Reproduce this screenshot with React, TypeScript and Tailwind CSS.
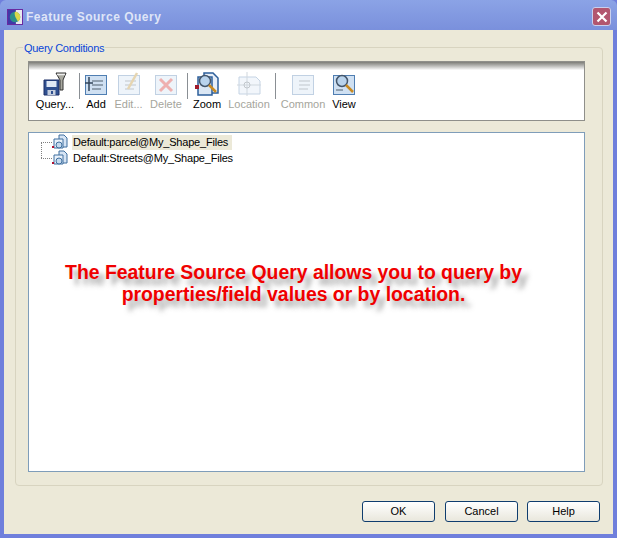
import type { ReactNode } from "react";

function Save() {
  return (
    <svg viewBox="0 0 24 24" className="h-6 w-6">
      <path d="M1 8h15v15H1z" fill="#2f4f8f" stroke="#1d2f66" />
      <path d="M3.500 9h10v6h-10z" fill="#dfe8f5" />
      <path d="M4.500 18h8v5h-8z" fill="#c5cede" />
      <path d="M8 19h2v3H8z" fill="#2f4f8f" />
      <path d="M13 1h10l-3 7v10h-3V8z" fill="#a9a9a0" stroke="#333" strokeWidth="1" />
      <path d="M14 2.500h8" stroke="#eee" strokeWidth="1.500" />
    </svg>
  );
}

function Sheet({ faded, children }: { faded?: boolean; children: ReactNode }) {
  return (
    <svg viewBox="0 0 24 24" className={faded ? "h-6 w-6 opacity-35" : "h-6 w-6"}>
      <rect x="1.500" y="3.500" width="21" height="19" fill="#cfe0f2" stroke="#4f7eb2" />
      {children}
    </svg>
  );
}

function Lines() {
  return <path d="M8 9h11M8 13h11M8 17h9" stroke="#50606f" strokeWidth="1" />;
}

function Lens() {
  return (
    <>
      <circle cx="10" cy="9" r="5.500" fill="#b9d3ec" stroke="#44566b" strokeWidth="1.500" />
      <path d="M14 13l7 7" stroke="#c98a22" strokeWidth="2.500" />
    </>
  );
}

function LayerIcon() {
  return (
    <svg viewBox="0 0 16 16" className="h-4 w-4 shrink-0">
      <path d="M7 1h5l3 3v9H7z" fill="#d6e4f4" stroke="#3f6f9f" />
      <path d="M2 5h9v9H2z" fill="#e9f1fa" stroke="#3f6f9f" />
      <circle cx="7" cy="11" r="3" fill="#c6daee" stroke="#3f6f9f" />
      <rect x="0" y="12" width="2" height="2" fill="#b01030" />
    </svg>
  );
}

function ToolItem({ label, width, off, children }: { label: string; width: string; off?: boolean; children: ReactNode }) {
  return (
    <div className={`flex shrink-0 flex-col items-center ${width}`}>
      <div className="flex h-6 items-center">{children}</div>
      <span className={`mt-[2px] whitespace-nowrap text-[11px] leading-[13px] ${off ? "text-[#a5a59c]" : "text-black"}`}>{label}</span>
    </div>
  );
}

function Sep() {
  return <div className="mt-[1px] h-[26px] w-px shrink-0 bg-[#8a8f94]" />;
}

function DialogButton({ label }: { label: string }) {
  return (
    <button className="h-[21px] w-[73px] rounded-[3px] border border-[#0f3d6e] bg-gradient-to-b from-white to-[#e9e7dc] text-[11px] leading-none text-black">
      {label}
    </button>
  );
}

export default function App() {
  return (
    <div className="flex h-[538px] w-[617px] flex-col overflow-hidden bg-[#6f7fdc] font-['Liberation_Sans',sans-serif]">
      <div className="flex h-[30px] shrink-0 items-center rounded-t-[6px] bg-gradient-to-b from-[#8ba3e6] to-[#7a90dc] pl-[7px] pr-[6px] pt-[3px]">
        <svg viewBox="0 0 16 16" className="h-4 w-4 shrink-0 border border-[#6a2aa0]">
          <rect width="16" height="16" fill="#e8e8f0" />
          <path d="M0 0h9v16H0z" fill="#3f38a8" />
          <circle cx="8" cy="8" r="6" fill="#2c8f8a" />
          <path d="M8 2c4 0 6 3 6 6 0 2-1 4-2 5-2-1-2-3-3-4-1-2-2-5-1-7z" fill="#d8d84a" />
        </svg>
        <span className="ml-[3px] text-[12px] font-bold tracking-[0.5px] text-[#dfe5f7]">Feature Source Query</span>
        <div className="ml-auto flex h-[19px] w-[19px] items-center justify-center rounded-[3px] border border-[#c9d0ee] bg-[#b2566f]">
          <svg viewBox="0 0 12 12" className="h-3 w-3">
            <path d="M1.500 1.500l9 9M10.500 1.500l-9 9" stroke="#fff" strokeWidth="2.200" />
          </svg>
        </div>
      </div>
      <div className="mx-[4px] mb-[4px] flex min-h-0 flex-1 flex-col bg-[#ece9d8] pl-[11px] pr-[10px] pt-[17px]">
        <div className="relative h-[439px] rounded-[4px] border border-[#d8d4c0] pb-[13px] pl-[12px] pr-[17px] pt-[13px]">
          <span className="absolute left-[7px] top-[-6px] bg-[#ece9d8] px-[1px] text-[11px] leading-[13px] tracking-[-0.3px] text-[#0a46d8]">Query Conditions</span>
          <div className="flex h-[60px] items-start border border-[#8f8f8a] bg-gradient-to-b from-[#7d7d78] from-0% via-white via-[14%] to-white pl-[2px] pt-[10px]">
            <ToolItem label="Query..." width="w-[48px]"><Save /></ToolItem>
            <Sep />
            <ToolItem label="Add" width="w-[32px]">
              <Sheet><Lines /><path d="M5 5v14M1 11h8" stroke="#33455c" strokeWidth="1.500" /></Sheet>
            </ToolItem>
            <ToolItem label="Edit..." width="w-[33px]" off>
              <Sheet faded><Lines /><path d="M20 1L11 17" stroke="#b98a22" strokeWidth="2.500" /></Sheet>
            </ToolItem>
            <ToolItem label="Delete" width="w-[42px]" off>
              <Sheet faded><path d="M6 7l12 12M18 7L6 19" stroke="#d02020" strokeWidth="3" /></Sheet>
            </ToolItem>
            <Sep />
            <ToolItem label="Zoom" width="w-[38px]">
              <svg viewBox="0 0 24 24" className="h-6 w-6">
                <path d="M9 1h9l5 5v15H9z" fill="#e6eef8" stroke="#2d5f9a" strokeWidth="1.500" />
                <path d="M3 5h14v18H3z" fill="#dbe7f4" stroke="#2d5f9a" strokeWidth="1.500" />
                <Lens />
                <rect x="0" y="13" width="4" height="4" fill="#a01a2a" />
              </svg>
            </ToolItem>
            <ToolItem label="Location" width="w-[46px]" off>
              <svg viewBox="0 0 24 24" className="h-6 w-6 opacity-35">
                <path d="M2 5h17l4 4v13H2z" fill="#dbe7f4" stroke="#5c86b5" />
                <path d="M10 0v24M0 13h24" stroke="#7d8fa3" />
                <circle cx="10" cy="13" r="3" fill="none" stroke="#50606f" />
              </svg>
            </ToolItem>
            <div className="w-[3px] shrink-0" />
            <Sep />
            <ToolItem label="Common" width="w-[54px]" off>
              <Sheet faded><Lines /></Sheet>
            </ToolItem>
            <ToolItem label="View" width="w-[28px]">
              <Sheet><Lens /><path d="M4 18h7" stroke="#50606f" /></Sheet>
            </ToolItem>
          </div>
          <div className="relative mt-[11px] h-[340px] border border-[#7f9db9] bg-white pl-[12px] pt-[1px]">
            <span className="absolute left-[12px] top-[9px] h-[16px] border-l border-dotted border-[#808080]" />
            <div className="flex flex-col text-[11px] leading-[15px] tracking-[-0.2px] text-black">
              {["Default:parcel@My_Shape_Files", "Default:Streets@My_Shape_Files"].map((name, i) => (
                <div key={name} className="flex h-[16px] items-center">
                  <span className="w-[11px] border-t border-dotted border-[#808080]" />
                  <LayerIcon />
                  <span className={`ml-[4px] pl-[1px] pr-[4px] ${i === 0 ? "bg-[#ece9d8]" : ""}`}>{name}</span>
                </div>
              ))}
            </div>
            <div className="absolute left-0 right-0 top-[128px] pr-[26px] text-center text-[19.4px] font-bold leading-[22px] text-[#f00000] [text-shadow:6px_6px_5px_rgba(80,80,80,0.5)]">
              <p>The Feature Source Query allows you to query by</p>
              <p>properties/field values or by location.</p>
            </div>
          </div>
        </div>
        <div className="mr-[3px] mt-[15px] flex justify-end gap-[10px] [&>button:last-child]:ml-[-1px]">
          <DialogButton label="OK" />
          <DialogButton label="Cancel" />
          <DialogButton label="Help" />
        </div>
      </div>
    </div>
  );
}
